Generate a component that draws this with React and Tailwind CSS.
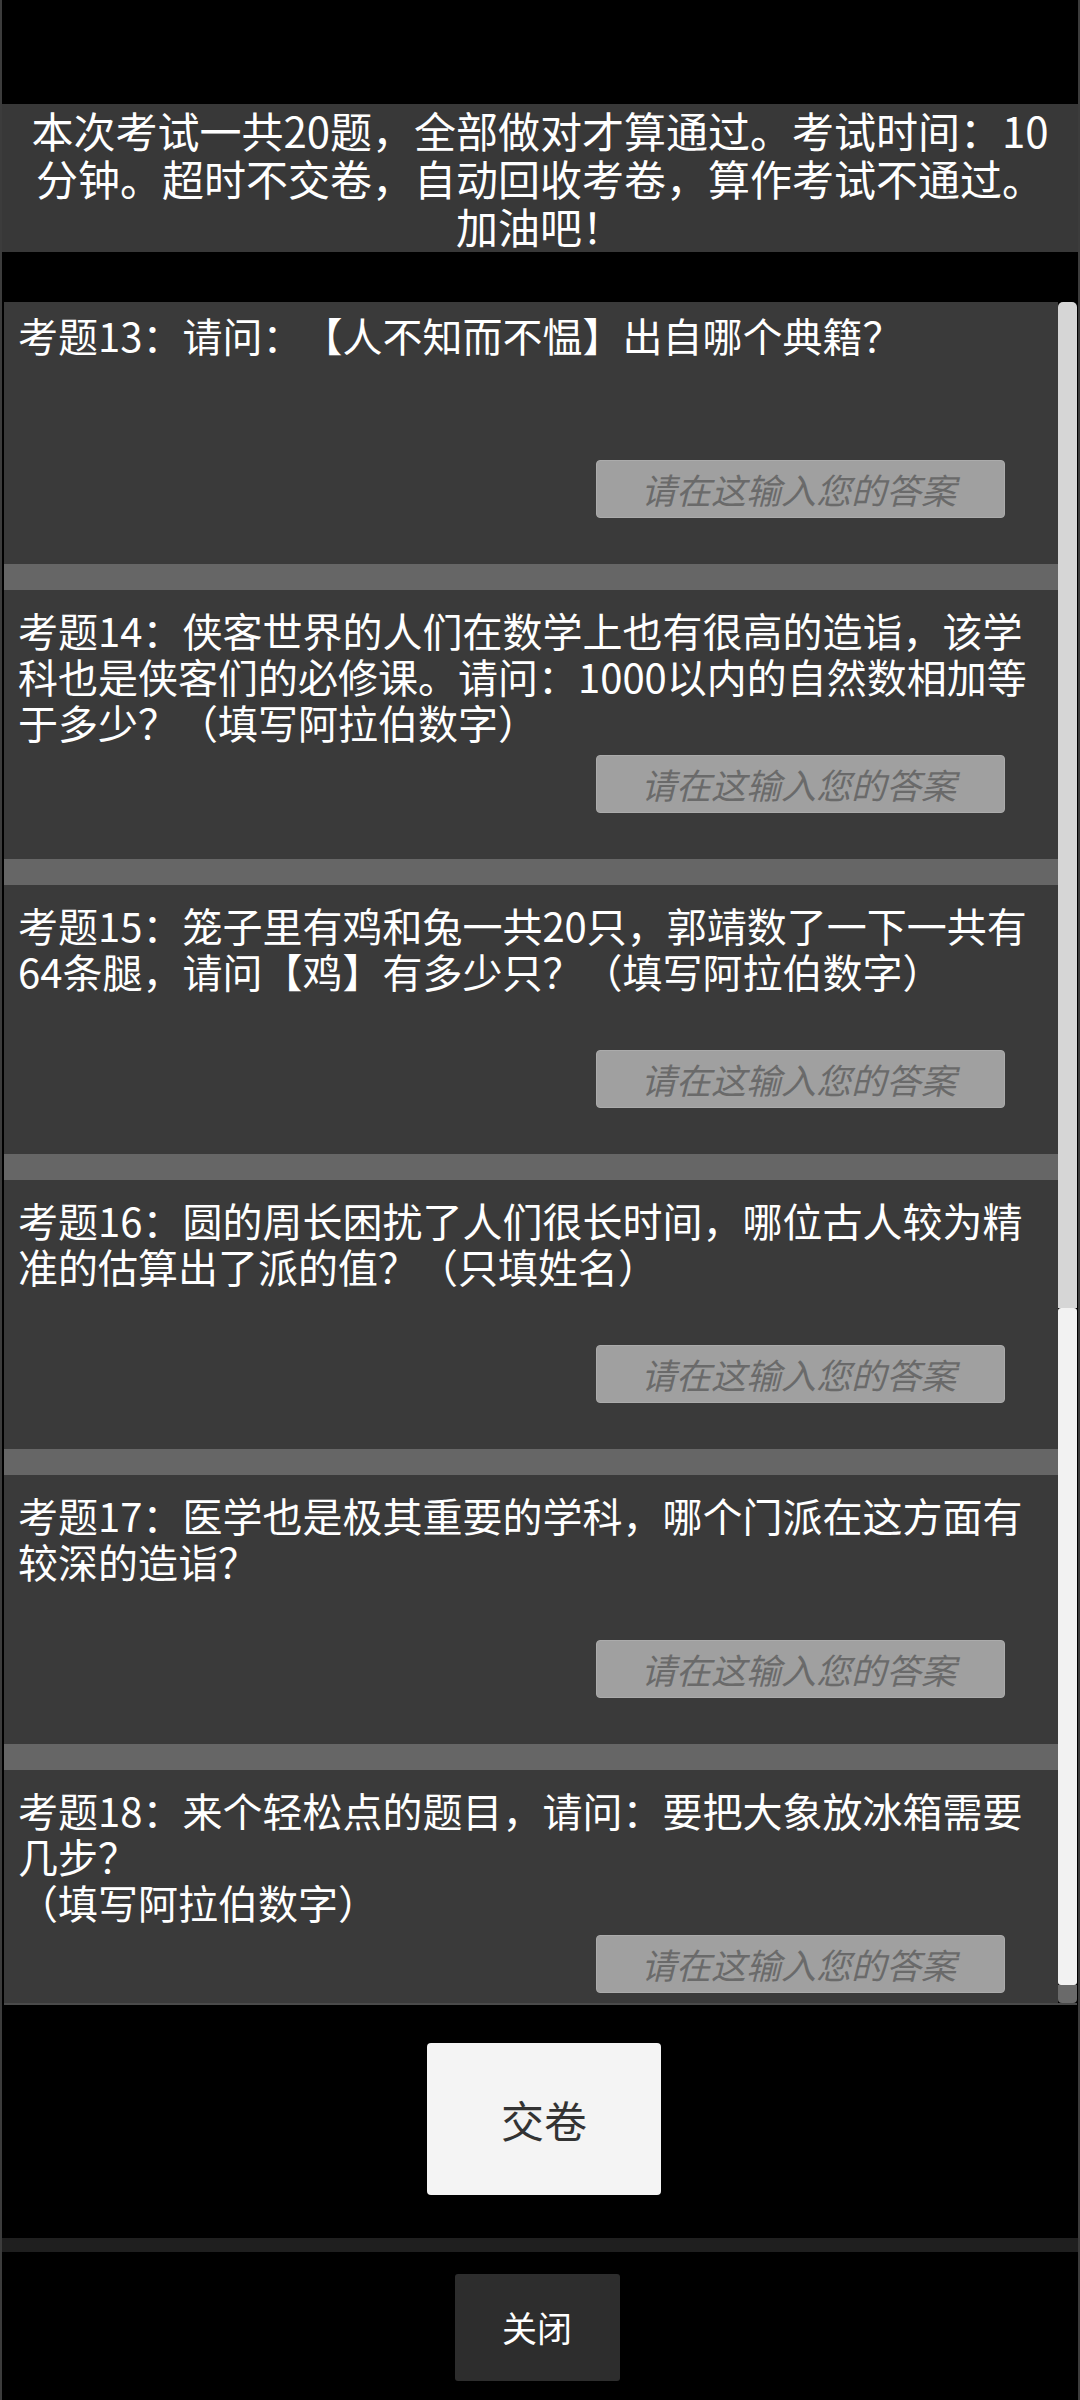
import React from 'react';

const questions = [
  ['考题13：请问：【人不知而不愠】出自哪个典籍？'],
  [
    '考题14：侠客世界的人们在数学上也有很高的造诣，该学',
    '科也是侠客们的必修课。请问：1000以内的自然数相加等',
    '于多少？（填写阿拉伯数字）',
  ],
  [
    '考题15：笼子里有鸡和兔一共20只，郭靖数了一下一共有',
    '64条腿，请问【鸡】有多少只？（填写阿拉伯数字）',
  ],
  [
    '考题16：圆的周长困扰了人们很长时间，哪位古人较为精',
    '准的估算出了派的值？（只填姓名）',
  ],
  ['考题17：医学也是极其重要的学科，哪个门派在这方面有', '较深的造诣？'],
  [
    '考题18：来个轻松点的题目，请问：要把大象放冰箱需要',
    '几步？',
    '（填写阿拉伯数字）',
  ],
];

const font = { fontFamily: '"Noto Sans CJK SC", "Noto Sans", sans-serif' };

function QuestionItem({ lines }) {
  return (
    <div className="shrink-0">
      <div className="flex h-[269px] flex-col bg-[#3a3a3a]">
        <div className="h-[165px] pl-[14px] pt-[17px] text-[40px] leading-[46px] text-white">
          {lines.map((l, i) => (
            <div key={i} className="whitespace-nowrap">
              {l}
            </div>
          ))}
        </div>
        <div className="mr-[53px] flex h-[58px] w-[409px] items-center justify-center self-end rounded-[4px] border border-[#ababab] bg-[#a0a0a0] pr-[4px] text-[35px] italic text-[#6a6a6a]">
          请在这输入您的答案
        </div>
      </div>
      <div className="h-[26px] bg-[#666666]" />
    </div>
  );
}

export default function App() {
  return (
    <div
      className="flex h-[2400px] w-[1080px] flex-col overflow-hidden border-x-2 border-[#3c3c3c] bg-black [text-spacing-trim:space-all]"
      style={font}
    >
      <div className="h-[104px] shrink-0" />

      <div className="flex h-[148px] shrink-0 flex-col items-center justify-center bg-[#383838] text-[42px] leading-[48px] text-white">
        <div>本次考试一共20题，全部做对才算通过。考试时间：10</div>
        <div>分钟。超时不交卷，自动回收考卷，算作考试不通过。</div>
        <div>加油吧！</div>
      </div>

      <div className="h-[50px] shrink-0" />

      {/* 题目列表 */}
      <div className="ml-[2px] mr-[1px] flex h-[1703px] shrink-0 border-b-2 border-[#4a4a4a]">
        <div className="flex flex-1 flex-col overflow-hidden">
          <div className="-mt-[7px]">
            {questions.map((q, i) => (
              <QuestionItem key={i} lines={q} />
            ))}
          </div>
        </div>
        <div className="flex w-[19px] flex-col">
          <div className="h-[1006px] rounded-t-[5px] bg-[#d6d6d6]" />
          <div className="h-[677px] rounded-[3px] bg-[#f2f2f2]" />
          <div className="flex-1 rounded-b-[4px] bg-[#6a6a6a]" />
        </div>
      </div>

      <div className="h-[38px] shrink-0" />

      <div className="flex shrink-0 justify-center pl-[8px]">
        <button className="flex h-[152px] w-[234px] items-center justify-center rounded-[4px] bg-[#f4f4f4] text-[43px] text-[#333333]">
          交卷
        </button>
      </div>

      <div className="h-[43px] shrink-0" />
      <div className="h-[14px] shrink-0 bg-[#1f1f1f]" />
      <div className="h-[22px] shrink-0" />

      <div className="flex shrink-0 justify-center pr-[6px]">
        <button className="flex h-[107px] w-[165px] items-center justify-center rounded-[3px] bg-[#2d2d2d] text-[35px] text-white">
          关闭
        </button>
      </div>
    </div>
  );
}
